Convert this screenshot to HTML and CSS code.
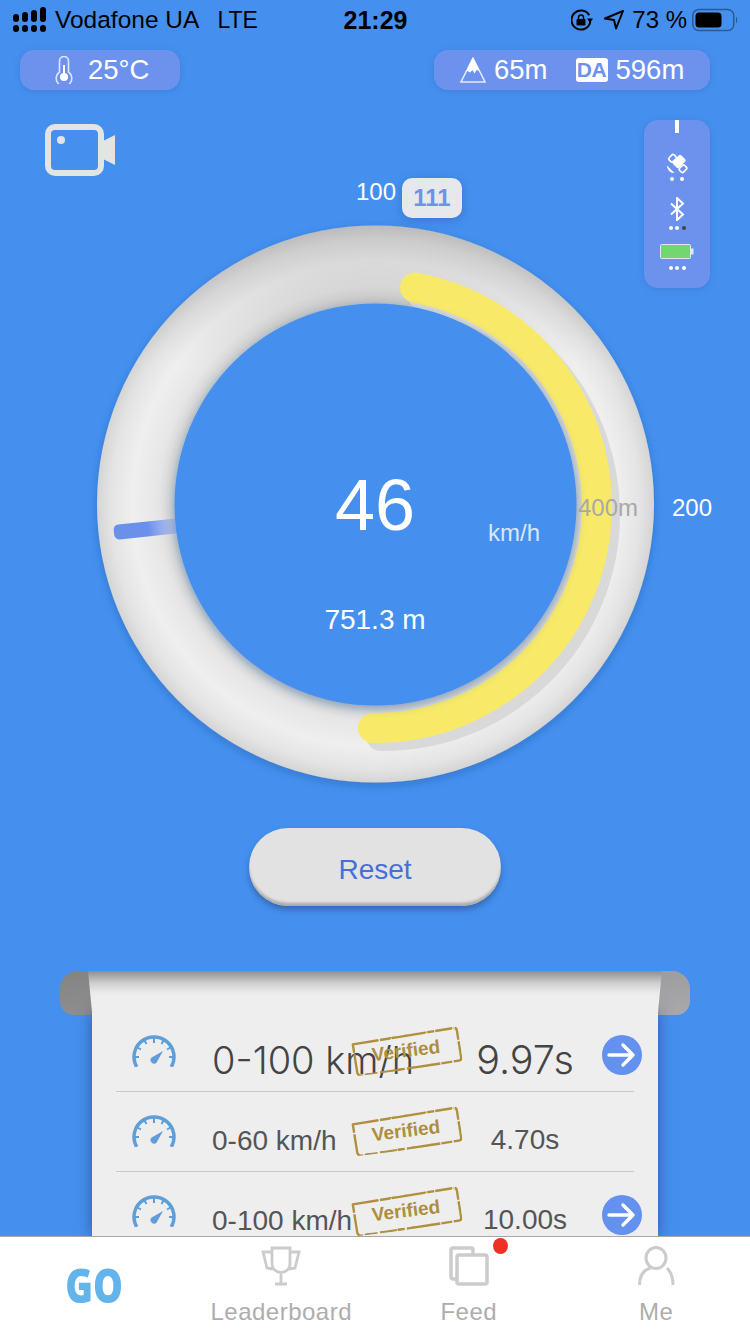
FILE: index.html
```html
<!DOCTYPE html>
<html lang="en">
<head>
  <meta charset="UTF-8">
  <title>Speedometer</title>
  <link rel="stylesheet" href="styles.css">
</head>
<body>
<svg class="defs" width="0" height="0">
  <defs>
    <symbol id="speedo" viewBox="0 0 44 32">
      <path d="M4.700 32A20 20 0 1 1 39.300 32" fill="none" stroke="#5f9ed8" stroke-width="3.500"/>
      <path d="M22 3v5M31.500 5.500l-2 3.500M38.500 12.500l-3.500 2M41 22h-4M12.500 5.500l2 3.500M5.500 12.500l3.500 2M3 22h4" fill="none" stroke="#5f9ed8" stroke-width="2"/>
      <path d="M31 16L24.600 27.400A3.500 3.500 0 1 1 19.600 22.400z" fill="#5f9ed8"/>
    </symbol>
    <symbol id="stamp" viewBox="0 0 110 38">
      <path d="M3 6L105 2Q108 2 108 5L109 32Q109 35 106 35L8 38Q5 38 4 35z" fill="none" stroke="#b0903f" stroke-width="2.400" stroke-dasharray="26 1.500 11 1 34 2 7 1 17 2.500 13 1.500" stroke-linejoin="round"/>
      <path d="M40 4L105 2M12 37L80 35.500" fill="none" stroke="#b0903f" stroke-width="1.200" stroke-dasharray="6 9 3 14"/>
    </symbol>
    <symbol id="arrow" viewBox="0 0 40 40">
      <circle cx="20" cy="20" r="20" fill="#6490ef"/>
      <path d="M7 20h24M21 10l10 10-10 10" fill="none" stroke="#fff" stroke-width="3.500" stroke-linecap="round" stroke-linejoin="round"/>
    </symbol>
  </defs>
</svg>

<div class="page">
  <div class="statusbar">
    <div class="status-left">
      <svg class="signal" viewBox="0 0 34 26" width="34" height="26">
        <rect x="0" y="7" width="6" height="8" rx="3"/><rect x="0" y="18" width="6" height="7" rx="3"/>
        <rect x="9" y="5" width="6" height="10" rx="3"/><rect x="9" y="18" width="6" height="7" rx="3"/>
        <rect x="18" y="3" width="6" height="12" rx="3"/><rect x="18" y="18" width="6" height="7" rx="3"/>
        <rect x="27" y="0" width="6" height="15" rx="3"/><rect x="27" y="18" width="6" height="7" rx="3"/>
      </svg>
      <span>Vodafone UA</span>
      <span class="net">LTE</span>
    </div>
    <div class="clock">21:29</div>
    <div class="status-right">
      <svg width="22" height="22" viewBox="0 0 22 22">
        <path d="M18.200 6.250A9.500 9.500 0 1 0 19.360 12.600" fill="none" stroke="#000" stroke-width="2"/>
        <path d="M16 9.500h6l-3 4.500z"/>
        <rect x="5.500" y="10" width="9" height="6.500" rx="1"/>
        <path d="M7.500 10.500V8.500a2.500 2.500 0 0 1 5 0v2" fill="none" stroke="#000" stroke-width="1.500"/>
      </svg>
      <svg class="loc" width="22" height="22" viewBox="0 0 22 22">
        <path d="M20 2L2 9.500 11 11 13 19.500z" fill="none" stroke="#000" stroke-width="2" stroke-linejoin="round"/>
      </svg>
      <span class="pct">73 %</span>
      <svg width="46" height="24" viewBox="0 0 46 24">
        <rect x=".750" y="1.500" width="41" height="21" rx="6" fill="none" stroke="#2a5a94" stroke-width="1.500"/>
        <rect x="3.500" y="4.500" width="26" height="15" rx="3.500"/>
        <path d="M44 8.500c1.500 1 1.500 6 0 7z" fill="#2a5a94"/>
      </svg>
    </div>
  </div>

  <div class="chips">
    <div class="chip chip-temp">
      <svg width="18" height="28" viewBox="0 0 18 28">
        <path d="M4.500 16V5a4.500 4.500 0 0 1 9 0V16a7.800 7.800 0 1 1-9 0z" fill="none" stroke="#dfe6fb" stroke-width="1.600"/>
        <circle cx="9" cy="21" r="4" fill="#fff"/>
        <path d="M9 9v10" stroke="#fff" stroke-width="2"/>
      </svg>
      <span>25°C</span>
    </div>
    <div class="chip chip-alt">
      <svg width="26" height="26" viewBox="0 0 26 26">
        <path d="M13 1L25 25H1z" fill="none" stroke="#e6ecfc" stroke-width="1.500"/>
        <path d="M13 1l6.500 13-3-1-2 3.500-2-3.500-2.500 2.500-3.500-2z" fill="#fff"/>
      </svg>
      <span class="alt-val">65m</span>
      <span class="da">DA</span>
      <span>596m</span>
    </div>
  </div>

  <div class="stage">
    <svg class="dial" viewBox="0 90 750 738" width="750" height="738">
      <defs>
        <radialGradient id="ringFill" gradientUnits="userSpaceOnUse" cx="375.500" cy="504" r="279">
          <stop offset="0.72" stop-color="#cfcfcf"/>
          <stop offset="0.78" stop-color="#e6e6e6"/>
          <stop offset="0.87" stop-color="#efefef"/>
          <stop offset="0.95" stop-color="#e4e4e4"/>
          <stop offset="1" stop-color="#d4d4d4"/>
        </radialGradient>
        <linearGradient id="ringTop" x1="0" y1="0" x2="0" y2="1">
          <stop offset="0" stop-color="#000" stop-opacity=".12"/>
          <stop offset=".25" stop-color="#000" stop-opacity="0"/>
        </linearGradient>
        <linearGradient id="needleFill" gradientUnits="userSpaceOnUse" x1="114" y1="0" x2="176" y2="0">
          <stop offset="0.55" stop-color="#6b90ec"/>
          <stop offset="1" stop-color="#6b90ec" stop-opacity=".3"/>
        </linearGradient>
        <filter id="soft" x="-10%" y="-10%" width="120%" height="120%">
          <feDropShadow dx="0" dy="3" stdDeviation="5" flood-color="#1c4e96" flood-opacity=".4"/>
        </filter>
      </defs>
      <circle cx="375.500" cy="504" r="278.500" fill="url(#ringFill)" filter="url(#soft)"/>
      <circle cx="375.500" cy="504" r="278.500" fill="url(#ringTop)"/>
      <path d="M423 295.600A222 222 0 0 1 605 514A222 222 0 0 1 381 736" fill="none" stroke="#d9d9d9" stroke-width="30" stroke-linecap="round"/>
      <path d="M415 287.600A222 222 0 0 1 597 506A222 222 0 0 1 373 728" fill="none" stroke="#f8ea68" stroke-width="30" stroke-linecap="round"/>
      <rect x="114" y="525" width="66" height="15" rx="5" fill="url(#needleFill)" transform="rotate(-6 114 533)"/>
      <circle cx="375.500" cy="504.500" r="201" fill="#4590ef" filter="url(#soft)"/>
    </svg>

    <div class="stage-top">
      <svg class="camera" width="70" height="52" viewBox="0 0 70 52">
        <rect x="3" y="3" width="53" height="46" rx="7" fill="none" stroke="#e4e4e4" stroke-width="6"/>
        <circle cx="16" cy="16" r="4" fill="#e4e4e4"/>
        <path d="M56 18L70 11V41L56 34z" fill="#e4e4e4"/>
      </svg>
      <div class="device">
        <i class="device-tick"></i>
        <svg class="sat" width="22" height="22" viewBox="0 0 22 22">
          <rect x="8.500" y="3.500" width="9" height="12" rx="2" transform="rotate(45 13 9.500)" fill="#fff"/>
          <rect x="3" y="3.500" width="7" height="5.500" rx="1.500" transform="rotate(-45 6.500 6.250)" fill="none" stroke="#fff" stroke-width="1.600"/>
          <rect x="13.500" y="14" width="7" height="5.500" rx="1.500" transform="rotate(-45 17 16.750)" fill="none" stroke="#fff" stroke-width="1.600"/>
          <path d="M1 13.500a7 7 0 0 0 7.500 7.500z" fill="#fff"/>
        </svg>
        <div class="dots dots-wide"><i></i><i></i></div>
        <svg class="bt" width="16" height="24" viewBox="0 0 16 24">
          <path d="M2 6.500l12 11-6 5.500V1l6 5.500-12 11" fill="none" stroke="#fff" stroke-width="2"/>
        </svg>
        <div class="dots dots-mid"><i></i><i></i><i class="off"></i></div>
        <svg class="batt" width="34" height="15" viewBox="0 0 34 15">
          <rect x=".500" y=".500" width="30" height="14" rx="1" fill="#74d66e" stroke="#dfe6fb"/>
          <rect x="31" y="4.500" width="2.500" height="6" fill="#dfe6fb"/>
        </svg>
        <div class="dots dots-low"><i></i><i></i><i></i></div>
      </div>
    </div>

    <span class="mark mark-100">100</span>
    <span class="peak">111</span>
    <span class="mark mark-400">400m</span>
    <span class="mark mark-200">200</span>
    <span class="speed">46</span>
    <span class="unit">km/h</span>
    <span class="dist">751.3 m</span>
  </div>

  <button class="reset">Reset</button>

  <div class="scroll">
    <i class="roller"></i>
    <div class="sheet">
      <div class="sheet-head"></div>
      <div class="sheet-rows">
        <div class="row row-big">
          <svg class="speedo"><use href="#speedo"/></svg>
          <span class="label">0-100 km/h</span>
          <span class="time">9.97s</span>
          <svg class="go"><use href="#arrow"/></svg>
          <div class="stamp"><svg><use href="#stamp"/></svg><span>Verified</span></div>
        </div>
        <div class="row">
          <svg class="speedo"><use href="#speedo"/></svg>
          <span class="label">0-60 km/h</span>
          <span class="time">4.70s</span>
          <div class="stamp"><svg><use href="#stamp"/></svg><span>Verified</span></div>
        </div>
        <div class="row">
          <svg class="speedo"><use href="#speedo"/></svg>
          <span class="label">0-100 km/h</span>
          <span class="time">10.00s</span>
          <svg class="go"><use href="#arrow"/></svg>
          <div class="stamp"><svg><use href="#stamp"/></svg><span>Verified</span></div>
        </div>
      </div>
    </div>
  </div>

  <div class="tabbar">
    <div class="tab"><span class="tab-go">GO</span></div>
    <div class="tab">
      <svg width="40" height="40" viewBox="0 0 40 40">
        <path d="M11 2h18v16a9 8.500 0 0 1-18 0zM11 6H2l4 16 6 1M29 6h9l-4 16-6 1M20 27v10M14 38h12" fill="none" stroke="#ccc" stroke-width="2.800"/>
      </svg>
      <span>Leaderboard</span>
    </div>
    <div class="tab">
      <svg width="40" height="40" viewBox="0 0 40 40">
        <path d="M8 33H4a2 2 0 0 1-2-2V4a2 2 0 0 1 2-2h18a2 2 0 0 1 2 2v4" fill="none" stroke="#ccc" stroke-width="3.500"/>
        <rect x="8" y="9" width="30" height="29" rx="2" fill="none" stroke="#ccc" stroke-width="3.500"/>
      </svg>
      <i class="badge"></i>
      <span>Feed</span>
    </div>
    <div class="tab">
      <svg width="40" height="40" viewBox="0 0 40 40">
        <ellipse cx="20" cy="12" rx="10" ry="10.500" fill="none" stroke="#ccc" stroke-width="3"/>
        <path d="M3.500 39c0-9 4-15 11-17M37 39c0-8-2-13-6-17" fill="none" stroke="#ccc" stroke-width="3"/>
      </svg>
      <span>Me</span>
    </div>
  </div>
</div>
</body>
</html>
```
FILE: styles.css
```css
* {
  padding: 0;
  margin: 0;
  box-sizing: border-box;
}

body {
  background: #4590ef;
  font-family: "Liberation Sans", Arial, sans-serif;
}

.defs {
  position: absolute;
}

.page {
  width: 750px;
  height: 1334px;
  overflow: hidden;
  display: flex;
  flex-direction: column;
}

/* status bar */
.statusbar {
  height: 40px;
  flex: none;
  display: grid;
  grid-template-columns: 1fr auto 1fr;
  align-items: center;
  padding: 0 12px 0 13px;
  font-size: 24.500px;
  color: #000;
}

.status-left {
  display: flex;
  align-items: center;
  gap: 8px;
}

.status-left .net {
  margin-left: 10px;
  font-size: 23px;
}

.clock {
  font-weight: bold;
  font-size: 25px;
}

.status-right {
  display: flex;
  align-items: center;
  justify-content: flex-end;
  font-size: 24px;
}

.loc {
  margin-left: 10px;
}

.pct {
  margin: 0 5px 0 7px;
}

/* chips */
.chips {
  height: 40px;
  margin-top: 10px;
  flex: none;
  display: flex;
  justify-content: space-between;
  padding: 0 40px 0 20px;
}

.chip {
  display: flex;
  align-items: center;
  background: #6d92ee;
  border-radius: 14px;
  box-shadow: 0 1px 6px rgba(40, 80, 160, 0.25);
  color: #fff;
  font-size: 27.500px;
}

.chip-temp {
  width: 160px;
  padding-left: 35px;
  gap: 15px;
}

.chip-alt {
  width: 276px;
  padding-left: 26px;
}

.alt-val {
  margin: 0 28px 0 8px;
}

.da {
  width: 32px;
  height: 24px;
  margin-right: 8px;
  background: #fff;
  border-radius: 3px;
  color: #6d92ee;
  font-size: 21px;
  font-weight: bold;
  line-height: 24px;
  text-align: center;
  letter-spacing: -0.500px;
}

/* gauge */
.stage {
  position: relative;
  height: 738px;
  flex: none;
}

.dial {
  position: absolute;
  left: 0;
  top: 0;
  overflow: visible;
}

.stage-top {
  position: relative;
  display: flex;
  justify-content: space-between;
  align-items: flex-start;
  padding: 30px 40px 0 45px;
}

.camera {
  margin-top: 4px;
}

.device {
  width: 66px;
  height: 168px;
  background: #6d92ee;
  border-radius: 14px;
  display: flex;
  flex-direction: column;
  align-items: center;
  box-shadow: 0 1px 6px rgba(40, 80, 160, 0.25);
}

.device-tick {
  width: 4px;
  height: 13px;
  background: #fff;
}

.sat {
  margin-top: 19px;
}

.bt {
  margin-top: 16px;
}

.batt {
  margin-top: 14px;
}

.dots {
  display: flex;
  gap: 2.500px;
}

.dots-wide {
  gap: 6px;
  margin-top: 3px;
}

.dots-mid {
  margin-top: 5px;
}

.dots-low {
  margin-top: 7px;
}

.dots i {
  width: 4px;
  height: 4px;
  border-radius: 50%;
  background: #fff;
}

.dots i.off {
  background: #444;
}

.mark {
  position: absolute;
  color: #fff;
  font-size: 24px;
  line-height: 28px;
}

.mark-100 {
  left: 356px;
  top: 88px;
}

.mark-200 {
  left: 672px;
  top: 404px;
}

.mark-400 {
  left: 578px;
  top: 404px;
  color: #a8a8a8;
}

.peak {
  position: absolute;
  left: 402px;
  top: 88px;
  width: 60px;
  height: 40px;
  background: #e7e8ec;
  border-radius: 10px;
  box-shadow: 0 2px 10px rgba(30, 70, 140, 0.35);
  color: #6d92ee;
  font-size: 24px;
  font-weight: bold;
  line-height: 40px;
  text-align: center;
}

.speed {
  position: absolute;
  left: 275px;
  top: 373px;
  width: 200px;
  color: #fff;
  font-size: 72px;
  line-height: 84px;
  text-align: center;
}

.unit {
  position: absolute;
  left: 488px;
  top: 429px;
  color: #dde6f8;
  font-size: 24px;
  line-height: 28px;
}

.dist {
  position: absolute;
  left: 275px;
  top: 514px;
  width: 200px;
  color: #fff;
  font-size: 28px;
  line-height: 32px;
  text-align: center;
}

/* reset */
.reset {
  display: block;
  width: 252px;
  height: 78px;
  margin-left: 249px;
  padding-top: 5px;
  flex: none;
  border: 0;
  border-radius: 39px;
  background: #e2e2e2;
  box-shadow: inset 0 -4px 3px -1px #a8a8a8, 0 4px 6px rgba(30, 60, 110, 0.45);
  color: #4670d8;
  font-family: "Liberation Sans", Arial, sans-serif;
  font-size: 28px;
}

/* results sheet */
.scroll {
  position: relative;
  flex: 1;
  min-height: 0;
  margin: 65px 60px 0;
}

.roller {
  position: absolute;
  left: 0;
  right: 0;
  top: 0;
  height: 44px;
  border-radius: 18px 18px 14px 14px;
  background: linear-gradient(170deg, #838383, #a9a9ad);
}

.sheet {
  position: relative;
  height: 100%;
  margin: 0 32px;
  display: flex;
  flex-direction: column;
}

.sheet-head {
  position: relative;
  z-index: 1;
  height: 41px;
  flex: none;
  margin: 0 -4px;
  background: linear-gradient(#8f8f8f, #cfcfcf 30%, #eaeaea 52%, #eeeeee 62%);
  clip-path: polygon(0 0, 100% 0, 99.300% 100%, 0.700% 100%);
}

.sheet-rows {
  flex: 1;
  min-height: 0;
  overflow: hidden;
  padding: 0 24px;
  background: #eeeeee;
  box-shadow: 0 0 14px rgba(20, 40, 80, 0.5);
}

.row {
  position: relative;
  height: 80px;
  display: grid;
  grid-template-columns: 96px 253px 120px 1fr;
  align-items: start;
  border-bottom: 1px solid #c9c9c9;
  color: #555;
}

.speedo {
  width: 44px;
  height: 32px;
  margin: 23px 0 0 16px;
}

.label {
  margin-top: 33px;
  font-size: 28px;
  line-height: 32px;
  white-space: nowrap;
}

.time {
  margin-top: 32px;
  font-size: 28px;
  line-height: 32px;
  text-align: center;
}

.row-big .label {
  margin-top: 25px;
  font-family: Inter, "Liberation Sans", sans-serif;
  font-size: 38px;
  font-weight: 300;
  line-height: 46px;
  color: #444;
}

.row-big .time {
  margin-top: 25px;
  font-family: Inter, "Liberation Sans", sans-serif;
  font-size: 39.500px;
  font-weight: 300;
  line-height: 46px;
  color: #444;
}

.go {
  width: 40px;
  height: 40px;
  margin: 23px 0 0 17px;
  overflow: visible;
}

.stamp {
  position: absolute;
  left: 235px;
  top: 20px;
  width: 110px;
  height: 38px;
  transform: rotate(-7deg);
}

.stamp svg {
  width: 110px;
  height: 38px;
}

.stamp span {
  position: absolute;
  left: 0;
  right: 0;
  top: 0;
  color: #ad8e3e;
  font-size: 19px;
  font-weight: bold;
  line-height: 38px;
  text-align: center;
}

/* tab bar */
.tabbar {
  position: relative;
  height: 98px;
  flex: none;
  display: grid;
  grid-template-columns: repeat(4, 1fr);
  background: #fff;
  border-top: 1px solid #a8a8a8;
}

.tab {
  position: relative;
  display: flex;
  flex-direction: column;
  align-items: center;
  padding-top: 9px;
  color: #adadad;
  font-size: 24px;
  letter-spacing: 0.500px;
  line-height: 30px;
}

.tab svg {
  margin-bottom: 11px;
}

.tab-go {
  margin-top: 16px;
  color: #64b4ec;
  font-family: "Open Sans", sans-serif;
  font-size: 47px;
  font-weight: 800;
  line-height: 46px;
  letter-spacing: 0;
  transform: scaleX(0.8);
}

.badge {
  position: absolute;
  left: 118px;
  top: 1px;
  width: 15px;
  height: 16px;
  border-radius: 50%;
  background: #ee3124;
}
```
